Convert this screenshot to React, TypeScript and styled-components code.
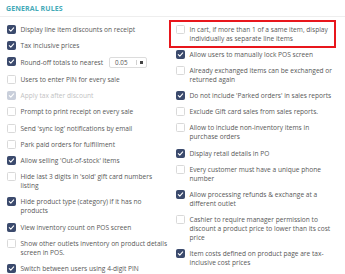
import React from 'react'
import styled, { createGlobalStyle } from 'styled-components'

type CheckState = 'on' | 'off' | 'disabled'

interface IRule {
  label: string
  state: CheckState
  select?: string
  highlight?: boolean
}

const GlobalStyle = createGlobalStyle`
  html, body {
    margin: 0;
    padding: 0;
    background: #fff;
  }
  body {
    font-family: 'Open Sans', 'Liberation Sans', sans-serif;
  }
`

const Panel = styled.div`
  width: 345px;
  height: 274px;
  overflow: hidden;
  background: #fff;
`
const Title = styled.h2`
  margin: 0;
  padding: 3.5px 6px;
  font-size: 7px;
  line-height: 9px;
  font-weight: 700;
  letter-spacing: 0.1px;
  color: #45aab8;
  text-transform: uppercase;
  border-bottom: 1px solid #eeeeee;
`
const Columns = styled.div`
  display: grid;
  grid-template-columns: 163px 163px;
  column-gap: 6px;
  align-items: start;
  padding: 7.5px 6px 0 7px;
`
const Column = styled.div`
  display: flex;
  flex-direction: column;
  gap: 7.2px;
`
const Row = styled.label<{ $highlight?: boolean }>`
  display: flex;
  align-items: flex-start;
  gap: 4.5px;
  ${(p) =>
    p.$highlight &&
    `
    margin: -5px 3px -5px -7px;
    padding: 3px 3px 3px 5px;
    border: 2px solid #e8161c;
  `}
`
const Box = styled.span<{ $state: CheckState }>`
  flex: 0 0 9px;
  width: 9px;
  height: 9px;
  box-sizing: border-box;
  border-radius: 1.5px;
  display: flex;
  align-items: center;
  justify-content: center;
  background: ${(p) =>
    p.$state === 'on' ? '#3b4a6d' : p.$state === 'disabled' ? '#c9cfdb' : '#fff'};
  border: 1px solid
    ${(p) =>
      p.$state === 'on' ? '#3b4a6d' : p.$state === 'disabled' ? '#c9cfdb' : '#d9d9d9'};
`
const Text = styled.span<{ $muted?: boolean }>`
  font-size: 6.6px;
  line-height: 9px;
  color: ${(p) => (p.$muted ? '#c2c2c2' : '#585858')};
`
const InlineField = styled.span`
  display: flex;
  align-items: center;
  gap: 6px;
  height: 11px;
`
const Select = styled.span`
  display: flex;
  align-items: center;
  width: 38px;
  height: 11px;
  box-sizing: border-box;
  border: 1px solid #dcdcdc;
  border-radius: 2px;
  padding-left: 5px;
  font-size: 6.3px;
  color: #555;
`
const SelectValue = styled.span`
  flex: 1;
`
const Divider = styled.span`
  width: 1px;
  height: 5px;
  background: #d0d0d0;
  margin-right: 3px;
`
const Arrow = styled.span`
  width: 3px;
  height: 2.5px;
  background: #444;
  margin-right: 3px;
`

const left: IRule[] = [
  { label: 'Display line item discounts on receipt', state: 'on' },
  { label: 'Tax inclusive prices', state: 'on' },
  { label: 'Round-off totals to nearest', state: 'on', select: '0.05' },
  { label: 'Users to enter PIN for every sale', state: 'off' },
  { label: 'Apply tax after discount', state: 'disabled' },
  { label: 'Prompt to print receipt on every sale', state: 'off' },
  { label: "Send 'sync log' notifications by email", state: 'off' },
  { label: 'Park paid orders for fulfillment', state: 'off' },
  { label: "Allow selling 'Out-of-stock' items", state: 'on' },
  { label: "Hide last 3 digits in 'sold' gift card numbers listing", state: 'off' },
  { label: 'Hide product type (category) if it has no products', state: 'on' },
  { label: 'View inventory count on POS screen', state: 'on' },
  { label: 'Show other outlets inventory on product details screen in POS.', state: 'off' },
  { label: 'Switch between users using 4-digit PIN', state: 'on' },
]

const right: IRule[] = [
  {
    label: 'In cart, if more than 1 of a same item, display individually as separate line items',
    state: 'off',
    highlight: true,
  },
  { label: 'Allow users to manually lock POS screen', state: 'on' },
  { label: 'Already exchanged items can be exchanged or returned again', state: 'off' },
  { label: "Do not include 'Parked orders' in sales reports", state: 'on' },
  { label: 'Exclude Gift card sales from sales reports.', state: 'off' },
  { label: 'Allow to include non-inventory items in purchase orders', state: 'off' },
  { label: 'Display retail details in PO', state: 'on' },
  { label: 'Every customer must have a unique phone number', state: 'off' },
  { label: 'Allow processing refunds & exchange at a different outlet', state: 'on' },
  {
    label: 'Cashier to require manager permission to discount a product price to lower than its cost price',
    state: 'off',
  },
  { label: 'Item costs defined on product page are tax-inclusive cost prices', state: 'on' },
]

const Check: React.FC<{ state: CheckState }> = ({ state }) => (
  <Box $state={state}>
    {state !== 'off' && (
      <svg width="7" height="7" viewBox="0 0 7 7">
        <polyline
          points="1.3,3.7 2.8,5.1 5.7,1.9"
          fill="none"
          stroke="#fff"
          strokeWidth="1.1"
          strokeLinecap="round"
          strokeLinejoin="round"
        />
      </svg>
    )}
  </Box>
)

const Rule: React.FC<IRule> = ({ label, state, select, highlight }) => (
  <Row $highlight={highlight}>
    <Check state={state} />
    {select ? (
      <InlineField>
        <Text>{label}</Text>
        <Select>
          <SelectValue>{select}</SelectValue>
          <Divider />
          <Arrow />
        </Select>
      </InlineField>
    ) : (
      <Text $muted={state === 'disabled'}>{label}</Text>
    )}
  </Row>
)

export default function App() {
  return (
    <Panel>
      <GlobalStyle />
      <Title>General Rules</Title>
      <Columns>
        <Column>
          {left.map((r) => (
            <Rule key={r.label} {...r} />
          ))}
        </Column>
        <Column>
          {right.map((r) => (
            <Rule key={r.label} {...r} />
          ))}
        </Column>
      </Columns>
    </Panel>
  )
}
